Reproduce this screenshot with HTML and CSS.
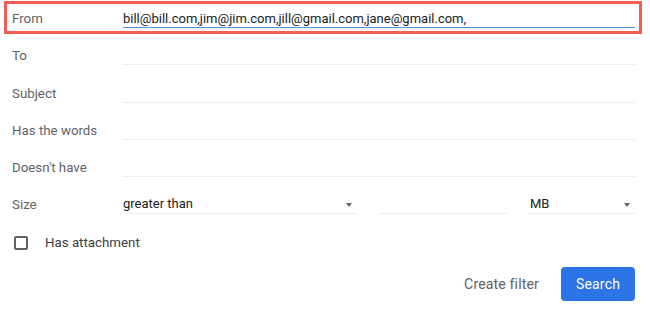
FILE: index.html
```html
<!DOCTYPE html>
<html>
<head>
<meta charset="utf-8">
<link rel="stylesheet" href="styles.css">
</head>
<body>
<div class="panel">
  <div class="row">
    <div class="label">From</div>
    <div class="field active">bill@bill.com,jim@jim.com,jill@gmail.com,jane@gmail.com,</div>
  </div>
  <div class="row">
    <div class="label">To</div>
    <div class="field"></div>
  </div>
  <div class="row">
    <div class="label">Subject</div>
    <div class="field"></div>
  </div>
  <div class="row">
    <div class="label">Has the words</div>
    <div class="field"></div>
  </div>
  <div class="row">
    <div class="label">Doesn't have</div>
    <div class="field"></div>
  </div>
  <div class="row">
    <div class="label">Size</div>
    <div class="size">
      <div class="field select sel-op">greater than<span class="arrow"></span></div>
      <div class="field num"></div>
      <div class="field select sel-unit">MB<span class="arrow"></span></div>
    </div>
  </div>
  <div class="row check-row">
    <span class="checkbox"></span>
    <span class="check-label">Has attachment</span>
  </div>
  <div class="actions">
    <span class="create">Create filter</span>
    <span class="search">Search</span>
  </div>
  <div class="highlight"></div>
</div>
</body>
</html>
```
FILE: styles.css
```css
html, body {
  margin: 0;
  padding: 0;
  background: #fff;
}
.panel {
  position: relative;
  width: 650px;
  height: 310px;
  font-family: Roboto, "Liberation Sans", sans-serif;
  font-size: 13px;
  color: #202124;
}
.row {
  display: flex;
  align-items: flex-end;
  height: 37.2px;
  padding: 0 15px 0 12px;
  box-sizing: border-box;
  padding-bottom: 9px;
}
.label {
  width: 111px;
  flex: none;
  font-size: 13.3px;
  line-height: 18px;
  padding-bottom: 0;
  color: #5f6368;
}
.field {
  flex: 1;
  height: 18px;
  line-height: 20px;
  border-bottom: 1px solid #eceef0;
  white-space: nowrap;
}
.field.active {
  border-bottom-color: #5b8fe3;
}
.size {
  flex: 1;
  display: flex;
  align-items: flex-end;
}
.select {
  position: relative;
  display: flex;
  align-items: center;
}
.sel-op {
  flex: none;
  width: 234px;
}
.num {
  flex: none;
  width: 128px;
  margin-left: 22px;
}
.sel-unit {
  flex: none;
  width: 105px;
  margin-left: 20px;
  padding-left: 3px;
}
.arrow {
  position: absolute;
  right: 5px;
  top: 8px;
  width: 0;
  height: 0;
  border-left: 3.5px solid transparent;
  border-right: 3.5px solid transparent;
  border-top: 4px solid #5f6368;
}
.check-row {
  align-items: center;
  padding: 0 0 0 14px;
  height: 37px;
}
.checkbox {
  width: 14px;
  height: 14px;
  box-sizing: border-box;
  border: 2px solid #5f6368;
  border-radius: 2px;
  margin-top: 2px;
}
.check-label {
  margin-left: 17px;
  font-size: 13.3px;
  margin-top: 1px;
  color: #3c4043;
}
.actions {
  display: flex;
  justify-content: flex-end;
  align-items: center;
  padding: 7px 15px 0 0;
  gap: 22px;
}
.create {
  font-size: 14.2px;
  color: #5f6368;
  letter-spacing: 0.1px;
}
.search {
  width: 74px;
  height: 34px;
  box-sizing: border-box;
  background: #2a74e6;
  color: #fff;
  border-radius: 4px;
  font-size: 14px;
  display: flex;
  align-items: center;
  justify-content: center;
  letter-spacing: 0.2px;
}
.highlight {
  position: absolute;
  left: 4px;
  top: 1px;
  width: 638px;
  height: 33px;
  box-sizing: border-box;
  border: 3px solid #f25c52;
}
```
